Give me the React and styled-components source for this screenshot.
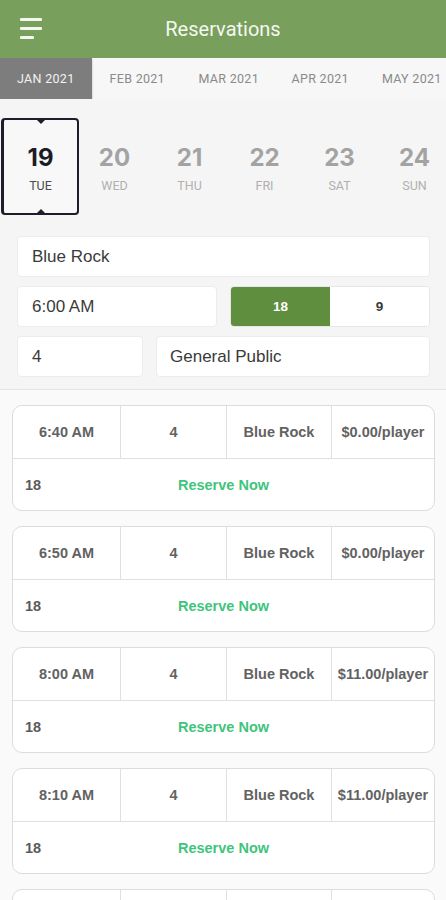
import React from "react"
import styled, { createGlobalStyle } from "styled-components"

const GlobalStyle = createGlobalStyle`
  html, body {
    margin: 0;
    padding: 0;
    background: #fafafa;
    font-family: "Liberation Sans", Arial, sans-serif;
  }
  * { box-sizing: border-box; }
`

const Page = styled.div`
  width: 446px;
  min-height: 900px;
  background: #fafafa;
  padding-bottom: 15px;
`

const Header = styled.header`
  height: 58px;
  background: #799f5d;
  display: flex;
  align-items: center;
  position: relative;
`

const MenuButton = styled.div`
  position: absolute;
  left: 20px;
  top: 18px;
  width: 24px;
  height: 22px;
  display: flex;
  flex-direction: column;
  gap: 6px;

  span {
    display: block;
    height: 3px;
    border-radius: 1px;
    background: #f3f7ef;
  }
  span:nth-child(1) { width: 22px; }
  span:nth-child(2) { width: 22px; }
  span:nth-child(3) { width: 14px; }
`

const Title = styled.h1`
  margin: 0;
  flex: 1;
  text-align: center;
  font-family: Roboto, "Liberation Sans", sans-serif;
  font-weight: 400;
  font-size: 20px;
  color: #f4f8f1;
`

const MonthBar = styled.nav`
  height: 41px;
  display: flex;
  background: #f7f7f7;
  overflow: hidden;
`

const MonthTab = styled.div`
  flex: 0 0 91.5px;
  display: flex;
  align-items: center;
  justify-content: center;
  font-family: Roboto, "Liberation Sans", sans-serif;
  font-size: 12.5px;
  letter-spacing: 0.3px;
  white-space: nowrap;
  color: ${(p) => (p.$active ? "#f2f2f2" : "#8a8a8a")};
  background: ${(p) => (p.$active ? "#7d7d7d" : "transparent")};
  box-shadow: ${(p) => (p.$active ? "0 1px 2px rgba(0,0,0,0.25)" : "none")};
`

const Top = styled.div`
  background: #f5f5f5;
  border-bottom: 1px solid #e4e4e4;
  padding-bottom: 12px;
`

const DateStrip = styled.div`
  display: grid;
  grid-template-columns: repeat(6, 75px);
  padding: 19px 0 0 2px;
`

const DateCell = styled.div`
  position: relative;
  height: 97px;
  margin: ${(p) => (p.$active ? "0 -2px 0 -1px" : "0")};
  display: flex;
  flex-direction: column;
  align-items: center;
  padding-top: 25px;
  border: ${(p) => (p.$active ? "2px solid #1d1d2b" : "2px solid transparent")};
  border-left-width: ${(p) => (p.$active ? "3px" : "2px")};
  border-radius: 4px;
  background: ${(p) => (p.$active ? "#f8f8f8" : "transparent")};
`

const Notch = styled.span`
  position: absolute;
  left: 50%;
  width: 0;
  height: 0;
  margin-left: -5px;
  border-left: 5px solid transparent;
  border-right: 5px solid transparent;
  ${(p) =>
    p.$bottom
      ? "bottom: -1px; border-bottom: 5px solid #1d1d2b;"
      : "top: -1px; border-top: 5px solid #1d1d2b;"}
`

const DayNum = styled.div`
  font-family: Inter, "Liberation Sans", sans-serif;
  font-weight: 700;
  font-size: 24px;
  line-height: 26px;
  color: ${(p) => (p.$active ? "#1c1c28" : "#a3a3a3")};
`

const DayName = styled.div`
  margin-top: 7px;
  font-family: Roboto, "Liberation Sans", sans-serif;
  font-size: 12.5px;
  color: ${(p) => (p.$active ? "#4a4a4a" : "#b0b0b0")};
`

const Form = styled.div`
  display: flex;
  flex-direction: column;
  gap: 9px;
  padding: 21px 16px 0 17px;
`

const Row = styled.div`
  display: grid;
  grid-template-columns: ${(p) => p.$cols};
  gap: 13px;
`

const Field = styled.div`
  height: 41px;
  display: flex;
  align-items: center;
  padding-left: ${(p) => p.$pad || 14}px;
  background: #ffffff;
  border: 1px solid #ececec;
  border-radius: 4px;
  font-size: 17px;
  color: #3a3a3a;
`

const Segmented = styled.div`
  height: 41px;
  display: grid;
  grid-template-columns: 1fr 1fr;
  background: #ffffff;
  border: 1px solid #e6e6e6;
  border-radius: 4px;
  overflow: hidden;
`

const Segment = styled.div`
  display: flex;
  align-items: center;
  justify-content: center;
  font-size: 13.5px;
  font-weight: 700;
  color: ${(p) => (p.$on ? "#ffffff" : "#3a3a3a")};
  background: ${(p) => (p.$on ? "#5f8f3e" : "#ffffff")};
`

const List = styled.div`
  display: flex;
  flex-direction: column;
  gap: 15px;
  padding: 15px 11px 0 12px;
`

const Card = styled.div`
  background: #ffffff;
  border: 1px solid #dcdcdc;
  border-radius: 10px;
  overflow: hidden;
  flex-shrink: 0;
`

const CardTop = styled.div`
  height: 53px;
  display: grid;
  grid-template-columns: 107px 106px 105px 1fr;
  border-bottom: 1px solid #e0e0e0;
`

const Cell = styled.div`
  display: flex;
  align-items: center;
  justify-content: center;
  border-left: ${(p) => (p.$first ? "none" : "1px solid #e0e0e0")};
  font-size: 14.5px;
  font-weight: 700;
  color: #626262;
  white-space: nowrap;
`

const CardBottom = styled.div`
  height: 51px;
  display: grid;
  grid-template-columns: 1fr auto 1fr;
  align-items: center;
  padding: 0 12px;
`

const Holes = styled.span`
  font-size: 14.5px;
  font-weight: 700;
  color: #5a5a5a;
`

const Reserve = styled.span`
  font-size: 14.5px;
  font-weight: 700;
  color: #3fc47d;
`

const months = ["JAN 2021", "FEB 2021", "MAR 2021", "APR 2021", "MAY 2021"]
const days = [
  ["19", "TUE"],
  ["20", "WED"],
  ["21", "THU"],
  ["22", "FRI"],
  ["23", "SAT"],
  ["24", "SUN"],
]
const times = [
  ["6:40 AM", "$0.00/player"],
  ["6:50 AM", "$0.00/player"],
  ["8:00 AM", "$11.00/player"],
  ["8:10 AM", "$11.00/player"],
  ["8:20 AM", "$11.00/player"],
]

export default function App() {
  return (
    <Page>
      <GlobalStyle />
      <Header>
        <MenuButton>
          <span />
          <span />
          <span />
        </MenuButton>
        <Title>Reservations</Title>
      </Header>
      <MonthBar>
        {months.map((m, i) => (
          <MonthTab key={m} $active={i === 0}>
            {m}
          </MonthTab>
        ))}
      </MonthBar>
      <Top>
        <DateStrip>
          {days.map(([n, d], i) => (
            <DateCell key={n} $active={i === 0}>
              {i === 0 && <Notch />}
              {i === 0 && <Notch $bottom />}
              <DayNum $active={i === 0}>{n}</DayNum>
              <DayName $active={i === 0}>{d}</DayName>
            </DateCell>
          ))}
        </DateStrip>
        <Form>
          <Field>Blue Rock</Field>
          <Row $cols="1fr 1fr">
            <Field>6:00 AM</Field>
            <Segmented>
              <Segment $on>18</Segment>
              <Segment>9</Segment>
            </Segmented>
          </Row>
          <Row $cols="126px 1fr">
            <Field>4</Field>
            <Field $pad={13}>General Public</Field>
          </Row>
        </Form>
      </Top>
      <List>
        {times.map(([t, price]) => (
          <Card key={t}>
            <CardTop>
              <Cell $first>{t}</Cell>
              <Cell>4</Cell>
              <Cell>Blue Rock</Cell>
              <Cell>{price}</Cell>
            </CardTop>
            <CardBottom>
              <Holes>18</Holes>
              <Reserve>Reserve Now</Reserve>
            </CardBottom>
          </Card>
        ))}
      </List>
    </Page>
  )
}
